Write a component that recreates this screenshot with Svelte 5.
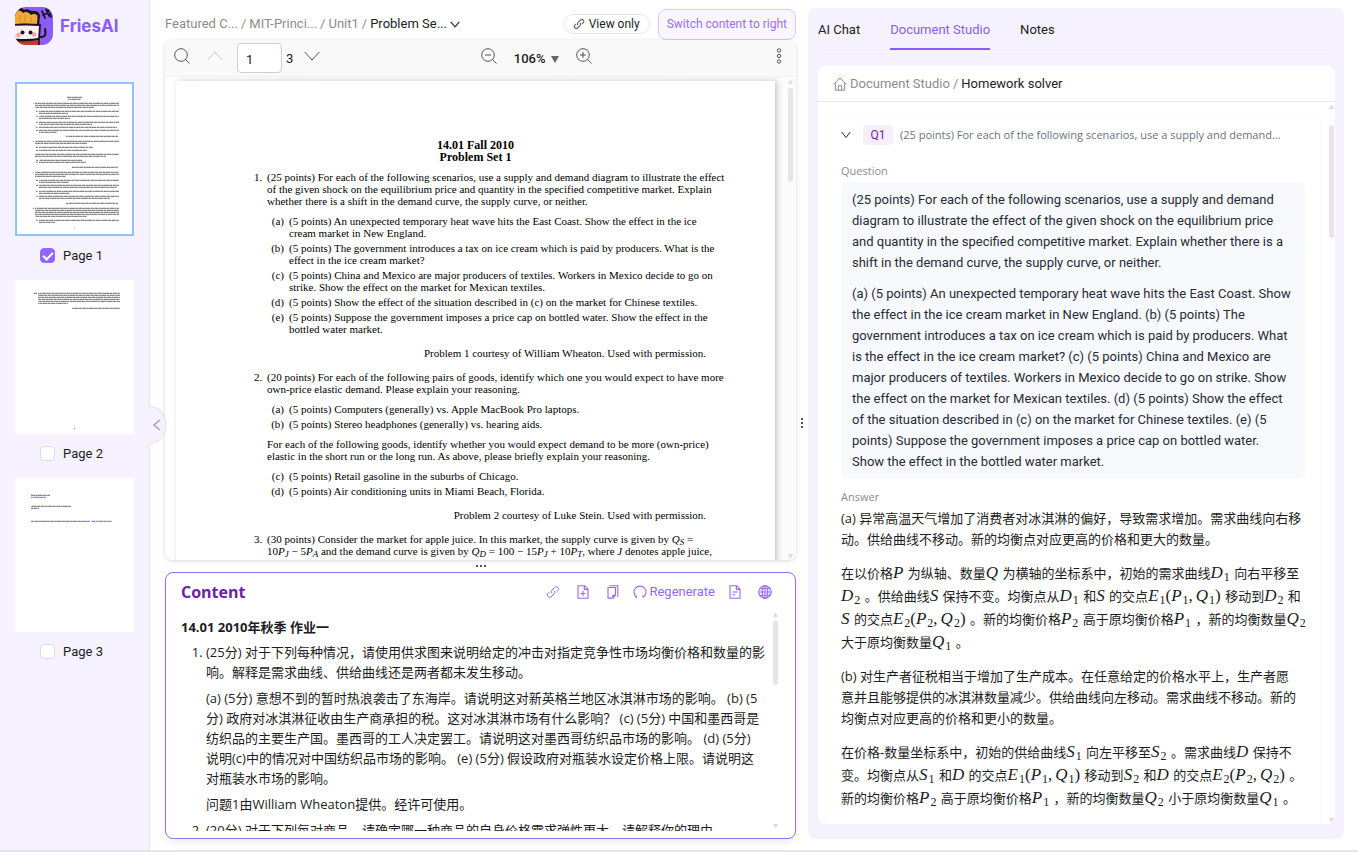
<script>
  // Thumbnail text rows: [x1, x2, y]; list markers are short rows of their own.
  const rows1 = [
    [52, 67, 15], [53, 66, 17],
    [18, 19, 21], [20, 104, 21], [20, 104, 23], [20, 79, 25],
    [21, 23, 29], [24, 104, 29], [24, 53, 31], [21, 23, 34], [24, 104, 34], [24, 55, 36],
    [21, 23, 40], [24, 104, 40], [24, 77, 42], [21, 23, 45], [24, 102, 45],
    [21, 23, 48], [24, 104, 48], [24, 42, 50], [51, 103, 54],
    [18, 19, 59], [20, 104, 59], [20, 72, 61], [21, 23, 65], [24, 78, 65], [21, 23, 68], [24, 72, 68],
    [20, 104, 72], [20, 91, 74], [21, 23, 78], [24, 67, 78], [21, 23, 80], [24, 71, 80], [57, 103, 85],
    [18, 19, 90], [20, 104, 90], [20, 104, 92], [20, 51, 94], [21, 23, 98], [24, 104, 98], [24, 54, 100],
    [21, 23, 103], [24, 104, 103], [24, 102, 105], [21, 23, 109], [24, 104, 109], [24, 55, 111],
    [21, 23, 114], [24, 104, 114], [24, 95, 116], [51, 103, 121],
    [18, 19, 126], [20, 104, 126], [20, 104, 128], [20, 104, 130], [20, 104, 132], [20, 72, 134],
    [21, 23, 138], [24, 104, 138], [24, 40, 140], [59, 60, 146]
  ];
  const rows2 = [
    [19, 22, 13], [23, 105, 13], [23, 105, 15], [23, 105, 17], [23, 105, 19], [23, 105, 21],
    [23, 53, 23], [57, 105, 28], [59, 60, 148]
  ];
  const rows3 = [
    [16, 35, 17], [16, 31, 19, 'link'], [16, 56, 28], [16, 24, 30], [16, 75, 43], [76, 97, 43, 'link']
  ];
  const pages = [
    { n: 1, rows: rows1, selected: true },
    { n: 2, rows: rows2, selected: false },
    { n: 3, rows: rows3, selected: false }
  ];

  // Text between $ signs is a formula; _n is a subscript.
  function parse(line) {
    return line.split('$').map((text, i) => {
      if (i % 2 === 0) return { text, math: null };
      const atoms = [];
      for (let k = 0; k < text.length; k++) {
        if (text[k] === '_') atoms.push({ c: text[++k], kind: 'sub' });
        else atoms.push({ c: text[k], kind: /[A-Z]/.test(text[k]) ? 'var' : text[k] === ',' ? 'comma' : 'op' });
      }
      return { text: '', math: atoms };
    });
  }

  // Problem set: each block has a kind, an optional marker and its typeset lines.
  const doc = [
    { k: 'item', m: '1.', l: ['(25 points) For each of the following scenarios, use a supply and demand diagram to illustrate the effect', 'of the given shock on the equilibrium price and quantity in the specified competitive market. Explain', 'whether there is a shift in the demand curve, the supply curve, or neither.'] },
    { k: 'sub first', m: '(a)', l: ['(5 points) An unexpected temporary heat wave hits the East Coast. Show the effect in the ice', 'cream market in New England.'] },
    { k: 'sub', m: '(b)', l: ['(5 points) The government introduces a tax on ice cream which is paid by producers. What is the', 'effect in the ice cream market?'] },
    { k: 'sub', m: '(c)', l: ['(5 points) China and Mexico are major producers of textiles. Workers in Mexico decide to go on', 'strike. Show the effect on the market for Mexican textiles.'] },
    { k: 'sub', m: '(d)', l: ['(5 points) Show the effect of the situation described in (c) on the market for Chinese textiles.'] },
    { k: 'sub', m: '(e)', l: ['(5 points) Suppose the government imposes a price cap on bottled water. Show the effect in the', 'bottled water market.'] },
    { k: 'credit', l: ['Problem 1 courtesy of William Wheaton. Used with permission.'] },
    { k: 'item', m: '2.', l: ['(20 points) For each of the following pairs of goods, identify which one you would expect to have more', 'own-price elastic demand. Please explain your reasoning.'] },
    { k: 'sub first', m: '(a)', l: ['(5 points) Computers (generally) vs. Apple MacBook Pro laptops.'] },
    { k: 'sub', m: '(b)', l: ['(5 points) Stereo headphones (generally) vs. hearing aids.'] },
    { k: 'item first', m: '', l: ['For each of the following goods, identify whether you would expect demand to be more (own-price)', 'elastic in the short run or the long run. As above, please briefly explain your reasoning.'] },
    { k: 'sub first', m: '(c)', l: ['(5 points) Retail gasoline in the suburbs of Chicago.'] },
    { k: 'sub', m: '(d)', l: ['(5 points) Air conditioning units in Miami Beach, Florida.'] },
    { k: 'credit', l: ['Problem 2 courtesy of Luke Stein. Used with permission.'] },
    { k: 'item', m: '3.', l: ['(30 points) Consider the market for apple juice. In this market, the supply curve is given by $Q_S =$', '$10P_J − 5P_A$ and the demand curve is given by $Q_D = 100 − 15P_J + 10P_T$, where $J$ denotes apple juice,', '$A$ denotes apples, and $T$ denotes tea.'] }
  ];

  const question = [
    ['(25 points) For each of the following scenarios, use a supply and demand', 'diagram to illustrate the effect of the given shock on the equilibrium price', 'and quantity in the specified competitive market. Explain whether there is a', 'shift in the demand curve, the supply curve, or neither.'],
    ['(a) (5 points) An unexpected temporary heat wave hits the East Coast. Show', 'the effect in the ice cream market in New England. (b) (5 points) The', 'government introduces a tax on ice cream which is paid by producers. What', 'is the effect in the ice cream market? (c) (5 points) China and Mexico are', 'major producers of textiles. Workers in Mexico decide to go on strike. Show', 'the effect on the market for Mexican textiles. (d) (5 points) Show the effect', 'of the situation described in (c) on the market for Chinese textiles. (e) (5', 'points) Suppose the government imposes a price cap on bottled water.', 'Show the effect in the bottled water market.']
  ];

  const answer = [
    { l: ['(a) 异常高温天气增加了消费者对冰淇淋的偏好，导致需求增加。需求曲线向右移', '动。供给曲线不移动。新的均衡点对应更高的价格和更大的数量。'] },
    { math: true, l: ['在以价格$P$ 为纵轴、数量$Q$ 为横轴的坐标系中，初始的需求曲线$D_1$ 向右平移至', '$D_2$ 。供给曲线$S$ 保持不变。均衡点从$D_1$ 和$S$ 的交点$E_1(P_1,Q_1)$ 移动到$D_2$ 和', '$S$ 的交点$E_2(P_2,Q_2)$ 。新的均衡价格$P_2$ 高于原均衡价格$P_1$ ，新的均衡数量$Q_2$', '大于原均衡数量$Q_1$ 。'] },
    { l: ['(b) 对生产者征税相当于增加了生产成本。在任意给定的价格水平上，生产者愿', '意并且能够提供的冰淇淋数量减少。供给曲线向左移动。需求曲线不移动。新的', '均衡点对应更高的价格和更小的数量。'] },
    { math: true, l: ['在价格-数量坐标系中，初始的供给曲线$S_1$ 向左平移至$S_2$ 。需求曲线$D$ 保持不', '变。均衡点从$S_1$ 和$D$ 的交点$E_1(P_1,Q_1)$ 移动到$S_2$ 和$D$ 的交点$E_2(P_2,Q_2)$ 。', '新的均衡价格$P_2$ 高于原均衡价格$P_1$ ，新的均衡数量$Q_2$ 小于原均衡数量$Q_1$ 。'] }
  ];
</script>

{#snippet rich(line)}
  {#each parse(line) as part}{#if part.math}<span class="math">{#each part.math as a}{#if a.kind === 'sub'}<sub>{a.c}</sub>{:else if a.kind === 'var'}<i>{a.c}</i>{:else if a.kind === 'comma'}<span class="comma">,</span>{:else}{a.c}{/if}{/each}</span>{:else}{part.text}{/if}{/each}
{/snippet}

{#snippet chain()}
  <path d="M6.800 9.400a2.600 2.600 0 0 1 0-3.600l3-3a2.600 2.600 0 0 1 3.700 3.700l-1.700 1.700M9.200 6.600a2.600 2.600 0 0 1 0 3.600l-3 3a2.600 2.600 0 0 1-3.700-3.700l1.700-1.700" />
{/snippet}

<div class="app">
  <aside class="side">
    <a class="brand" href="#home">
      <svg width="38" height="38" viewBox="0 0 38 38" aria-hidden="true">
        <defs><clipPath id="logo"><rect width="38" height="38" rx="11" /></clipPath></defs>
        <g clip-path="url(#logo)">
          <rect width="38" height="38" fill="#8b5cf6" />
          <path d="M0 0h3q4 0 6 3 4-2 7 1 7-1 9 4l-1 11H0z" fill="#1b1420" />
          <path d="M0 17V5q2-3 5-1 2 0 3 2 3-2 6 0 1 1 2 2 3-2 6 0 1 2 0 8v2q-11-2-22-1z" fill="#f0a93a" />
          <path d="M5 8v7M10 8v7M16 10v5" stroke="#d9892b" fill="none" />
          <path d="M-2 18q13-1 27 0l-1 14q-13 2-26 0z" fill="#fff0ee" stroke="#1b1420" stroke-width="1.800" />
          <path d="M-2 33q13 2 26-1v8H-2z" fill="#c8392c" stroke="#1b1420" stroke-width="1.600" />
          <circle cx="3.500" cy="28" r="2.300" fill="#f7a3a6" /><circle cx="19" cy="27.500" r="2.300" fill="#f7a3a6" />
          <circle cx="7.500" cy="25.500" r="2" fill="#1b1420" /><circle cx="15.500" cy="25.500" r="2" fill="#1b1420" />
          <path d="M25 30q7 1 5-8" fill="none" stroke="#1b1420" stroke-width="2" stroke-linecap="round" />
          <path d="M27 4l3 7M31 2l3 7M28 8l5-2M35 6l1 4M33 3l1 1" stroke="#1b1420" stroke-width="1.800" stroke-linecap="round" />
        </g>
      </svg>
      <span>FriesAI</span>
    </a>
    {#each pages as p}
      <div class="thumb">
        <svg class:current={p.selected} viewBox="0 0 119 154" aria-hidden="true">
          <rect width="119" height="154" fill="#fff" />
          {#each p.rows as r, i}
            <line x1={r[0]} x2={r[1]} y1={r[2] + 0.4} y2={r[2] + 0.4} stroke={r[3] ? '#8585f5' : '#888'} stroke-width="1.300" stroke-dasharray="4 .4 2 .3 5 .4 3 .5" stroke-dashoffset={i * 3} />
          {/each}
        </svg>
        <label><input type="checkbox" checked={p.selected} />Page {p.n}</label>
      </div>
    {/each}
    <button class="fold" aria-label="Collapse"><svg width="8" height="12" viewBox="0 0 8 12"><path d="M7 1L1 6l6 5" /></svg></button>
  </aside>

  <main class="middle">
    <header class="top">
      <nav class="crumbs">
        <a href="#1">Featured C...</a><span>/</span><a href="#2">MIT-Princi...</a><span>/</span><a href="#3">Unit1</a><span>/</span><a class="here" href="#4">Problem Se...</a>
        <svg width="10" height="7" viewBox="0 0 10 7"><path d="M.7.8L5 5.800 9.300.8" /></svg>
      </nav>
      <button class="pill"><svg width="12" height="12" viewBox="0 0 16 16">{@render chain()}</svg>View only</button>
      <button class="switch">Switch content to right</button>
    </header>

    <section class="viewer">
      <div class="tools">
        <button aria-label="Search"><svg width="16" height="16" viewBox="0 0 16 16"><circle cx="7" cy="7" r="6.300" /><path d="M11.500 11.500L15.500 15.500" /></svg></button>
        <button class="dim" aria-label="Previous page"><svg width="16" height="10" viewBox="0 0 16 10"><path d="M.7 9L8 1l7.300 8" /></svg></button>
        <input aria-label="Page number" value="1" />
        <span class="total">3</span>
        <button class="next" aria-label="Next page"><svg width="16" height="10" viewBox="0 0 16 10"><path d="M.7 1L8 9l7.300-8" /></svg></button>
        <button class="push" aria-label="Zoom out"><svg width="16" height="16" viewBox="0 0 16 16"><circle cx="7" cy="7" r="6.300" /><path d="M11.500 11.500L15.500 15.500M4 7h6" /></svg></button>
        <button class="zoom">106%<svg width="8" height="7" viewBox="0 0 8 7"><path d="M0 0h8L4 7z" /></svg></button>
        <button class="in" aria-label="Zoom in"><svg width="16" height="16" viewBox="0 0 16 16"><circle cx="7" cy="7" r="6.300" /><path d="M11.500 11.500L15.500 15.500M4 7h6M7 4v6" /></svg></button>
        <button class="push" aria-label="More"><svg width="6" height="16" viewBox="0 0 6 16"><circle cx="3" cy="2.500" r="1.700" /><circle cx="3" cy="8" r="1.700" /><circle cx="3" cy="13.500" r="1.700" /></svg></button>
      </div>
      <div class="stage">
        <article class="paper">
          <h1>14.01 Fall 2010<br />Problem Set 1</h1>
          {#each doc as b}
            <div class="block {b.k}">
              {#if b.m !== undefined}<span class="mark">{b.m}</span>{/if}
              <div class="lines">
                {#each b.l as line, i}
                  <div class="line">{@render rich(line)}</div>
                {/each}
              </div>
            </div>
          {/each}
        </article>
        <div class="bar"><i class="up"></i><b></b><i class="down"></i></div>
      </div>
    </section>

    <div class="grip" aria-hidden="true"><i></i><i></i><i></i></div>

    <section class="content">
      <header>
        <h2>Content</h2>
        <button aria-label="Copy link"><svg width="14" height="14" viewBox="0 0 16 16">{@render chain()}</svg></button>
        <button aria-label="Add file"><svg width="14" height="14" viewBox="0 0 14 14"><path d="M2 .7h6.500L12 4.200v9.100H2zM8.300.9v3.500h3.500M7 6v5M4.500 8.500h5" /></svg></button>
        <button aria-label="Copy"><svg width="14" height="14" viewBox="0 0 14 14"><path d="M3.500.7h8.300v11.300M2 2.500h7.500v7.800l-2.700 2.800H2zM9.500 10.300H6.800v2.800" /></svg></button>
        <button class="regen"><svg width="14" height="14" viewBox="0 0 14 14"><path d="M4 12.300A6 6 0 1 1 10 12.300M4 12.300l-1.800-.4M10 12.300l-.2-1.900" /></svg>Regenerate</button>
        <button aria-label="Document"><svg width="14" height="14" viewBox="0 0 14 14"><path d="M2 .7h6.500L12 4.200v9.100H2zM8.300.9v3.500h3.500M4.300 7h5.400M4.300 9.700h3" /></svg></button>
        <button aria-label="Language"><svg width="14" height="14" viewBox="0 0 14 14"><circle cx="7" cy="7" r="6.300" /><ellipse cx="7" cy="7" rx="2.800" ry="6.300" /><path d="M.7 7h12.600M7 .7v12.600M1.700 3.800h10.600M1.700 10.200h10.600" /></svg></button>
      </header>
      <div class="body">
        <h3>14.01 2010年秋季 作业一</h3>
        <ol>
          <li>
            <p>(25分) 对于下列每种情况，请使用供求图来说明给定的冲击对指定竞争性市场均衡价格和数量的影<br />响。解释是需求曲线、供给曲线还是两者都未发生移动。</p>
            <p>(a) (5分) 意想不到的暂时热浪袭击了东海岸。请说明这对新英格兰地区冰淇淋市场的影响。 (b) (5<br />分) 政府对冰淇淋征收由生产商承担的税。这对冰淇淋市场有什么影响？ (c) (5分) 中国和墨西哥是<br />纺织品的主要生产国。墨西哥的工人决定罢工。请说明这对墨西哥纺织品市场的影响。 (d) (5分)<br />说明(c)中的情况对中国纺织品市场的影响。 (e) (5分) 假设政府对瓶装水设定价格上限。请说明这<br />对瓶装水市场的影响。</p>
            <p>问题1由William Wheaton提供。经许可使用。</p>
          </li>
          <li><p>(20分) 对于下列每对商品，请确定哪一种商品的自身价格需求弹性更大，请解释你的理由。</p></li>
        </ol>
      </div>
      <div class="bar"><i class="up"></i><b></b><i class="down"></i></div>
    </section>
  </main>

  <div class="split" aria-hidden="true"><i></i><i></i><i></i></div>

  <section class="right">
    <nav class="tabs">
      <button>AI Chat</button>
      <button class="on">Document Studio</button>
      <button>Notes</button>
    </nav>
    <div class="card">
      <div class="path">
        <svg width="14" height="14" viewBox="0 0 14 14"><path d="M.6 7.300L7 .9l6.400 6.400M2.300 6v7.200h9.400V6M5.300 13V8.600h3.400V13" /></svg>
        <a href="#studio">Document Studio</a><span>/</span><a class="here" href="#solver">Homework solver</a>
      </div>
      <div class="scroll">
        <article class="qa">
          <div class="qhead">
            <svg width="10" height="8" viewBox="0 0 10 8"><path d="M.7 1L5 6.500 9.300 1" /></svg>
            <span class="tag">Q1</span>
            <span class="sum">(25 points) For each of the following scenarios, use a supply and demand...</span>
          </div>
          <h4>Question</h4>
          <div class="quest">
            {#each question as para}
              <p>{#each para as line, i}{#if i}<br />{/if}{line}{/each}</p>
            {/each}
          </div>
          <h4 class="ans">Answer</h4>
          <div class="answer">
            {#each answer as para}
              <p class:formula={para.math}>{#each para.l as line, i}{#if i}<br />{/if}{@render rich(line)}{/each}</p>
            {/each}
          </div>
        </article>
        <div class="bar"><i class="up"></i><b></b><i class="down"></i></div>
      </div>
    </div>
  </section>
</div>

<style>
  :global(body) { background: #fff; }
  .app, .app * { box-sizing: border-box; }
  .app {
    display: grid;
    grid-template-columns: 150px 15px minmax(0, 631fr) 12px minmax(0, 536fr);
    grid-template-rows: minmax(0, 1fr);
    height: 100vh;
    min-height: 600px;
    padding-right: 14px;
    border-bottom: 2px solid #e5e6ea;
    font: 13px/20px Roboto, "Noto Sans", sans-serif;
    color: #1c1c22;
    overflow: hidden;
  }
  h1, h2, h3, h4, p, ol { margin: 0; padding: 0; }
  a { color: inherit; text-decoration: none; }
  button { border: 0; background: none; padding: 0; margin: 0; font: inherit; color: inherit; display: flex; align-items: center; justify-content: center; cursor: pointer; white-space: nowrap; }
  svg { flex: none; fill: none; stroke: currentColor; }

  .side { position: relative; background: #f5f1ff; border-right: 1px solid #e9e5f3; padding: 7px 15px; }
  .brand { display: flex; align-items: center; gap: 7px; height: 38px; margin-bottom: 37px; font: 700 17px/24px Inter, sans-serif; color: #8b5cf6; }
  .brand svg { stroke: none; }
  .thumb > svg { display: block; width: 100%; height: 154px; stroke: none; }
  .thumb > .current { outline: 2px solid #91c3f9; outline-offset: -2px; }
  .thumb label { display: flex; align-items: center; justify-content: center; gap: 8px; height: 44px; padding: 0 6px 5px 0; }
  .thumb input { appearance: none; width: 15px; height: 15px; margin: 0; border: 1px solid #dcdce0; border-radius: 4px; background: #fff; display: grid; place-items: center; }
  .thumb input:checked { background: #9168fa; border-color: #9168fa; }
  .thumb input:checked::after { content: ""; width: 4px; height: 8px; margin-bottom: 2px; border: solid #fff; border-width: 0 2px 2px 0; transform: rotate(45deg); }
  .fold { position: absolute; left: 149px; top: 406px; width: 17px; height: 38px; border: 1px solid #e6e1f2; border-left: 0; border-radius: 0 19px 19px 0; background: #f5f1ff; color: #a3a5b3; z-index: 2; }
  .fold svg { stroke-width: 1.500; }

  .middle { grid-column: 3; display: grid; grid-template-rows: 32px minmax(0, 520fr) 12px minmax(0, 267fr); grid-template-columns: minmax(0, 1fr); min-width: 0; padding: 8px 0 11px; }
  .top { display: flex; align-items: center; gap: 8px; }
  .crumbs { display: flex; align-items: center; gap: 3px; margin-right: auto; color: #8c8c8c; white-space: nowrap; }
  .here { color: #1c1c22; }
  .crumbs svg { stroke: #333; stroke-width: 1.300; }
  .pill { height: 20px; padding: 0 9px; gap: 4px; border: 1px solid #e6e6ea; border-radius: 10px; font-size: 12px; }
  .pill svg { color: #666; stroke-width: 1.500; }
  .switch { height: 31px; padding: 0 8px; border: 1px solid #d9c9ff; border-radius: 8px; background: #f9f6ff; color: #9a6ffb; font-size: 12px; }

  .viewer { display: flex; flex-direction: column; min-height: 0; border-radius: 8px; overflow: hidden; background: #fff; box-shadow: 0 1px 4px rgba(0, 0, 0, .16); }
  .tools { display: flex; align-items: center; height: 37px; padding: 0 14px 0 9px; background: #f9f9f9; border-bottom: 1px solid #f0f0f0; color: #555; flex: none; }
  .tools > button { margin-bottom: 4px; }
  .tools .dim { color: #c9c9c9; margin-left: 17px; }
  .tools input { width: 45px; height: 30px; margin-left: 14px; padding: 2px 8px 0; border: 1px solid #cfcfcf; border-radius: 4px; background: #fff; font: inherit; color: #222; }
  .total { margin: 2px 0 0 4px; color: #222; }
  .tools .next { margin-left: 11px; }
  .tools .push { margin-left: auto; }
  .tools .in { margin-right: 24px; }
  .tools > .zoom { margin: 2px 17px 0; gap: 5px; color: #222; font-weight: 500; }
  .zoom svg { fill: #666; stroke: none; }

  .stage { position: relative; flex: 1; min-height: 0; padding: 4px 21px 0 11px; overflow: hidden; background: linear-gradient(90deg, #fff, #fbfbfb); }
  .paper { height: 800px; padding: 58px 69px 0 78px; background: #fff; box-shadow: 2px 0 6px rgba(0, 0, 0, .22); font: 11px/12px "Liberation Serif", "Times New Roman", serif; color: #000; }
  .paper h1 { margin-left: -9px; font-size: 12px; line-height: 12px; text-align: center; }
  .block { display: flex; margin-top: 3px; }
  .block.item { margin-top: 12px; }
  .block.first { margin-top: 8px; }
  h1 + .block.item { margin-top: 8px; }
  .block.credit { margin-top: 12px; justify-content: flex-end; }
  .mark { flex: none; width: 8px; margin-right: 5px; text-align: right; }
  .sub .mark { width: 30px; }
  .lines { flex: 1; min-width: 0; }
  .credit .lines { flex: none; }
  .line { white-space: nowrap; height: 12px; }
  .line .math sub { font-style: italic; font-size: 9px; margin: 0; vertical-align: -2px; }

  .bar { position: absolute; top: 0; bottom: 0; right: 3px; width: 5px; display: flex; flex-direction: column; }
  .bar b { height: 94px; margin-top: 4px; border-radius: 3px; background: #e6e6e6; }
  .bar i { border: solid transparent; border-width: 0 2px; height: 0; }
  .bar .up { border-bottom: 4px solid #dcdcdc; margin-top: 3px; }
  .bar .down { border-top: 4px solid #dcdcdc; margin-top: auto; margin-bottom: 2px; }

  .grip { display: flex; justify-content: center; align-items: center; gap: 2px; }
  .grip i, .split i { width: 2px; height: 2px; background: #555; }
  .split { display: flex; flex-direction: column; justify-content: center; align-items: center; gap: 2px; padding-bottom: 4px; }

  .content { position: relative; display: flex; flex-direction: column; min-height: 0; padding: 7px 15px; border: 1px solid #9a6cf0; border-radius: 8px; background: #fff; box-shadow: 0 3px 8px rgba(0, 0, 0, .08); }
  .content header { display: flex; align-items: center; gap: 16px; height: 24px; padding-right: 8px; color: #9568f8; flex: none; }
  .content h2 { margin-right: auto; font: 700 16px/24px "Open Sans", sans-serif; color: #6b21a8; }
  .content header svg { stroke-width: 1.100; }
  .content .regen { gap: 2px; margin: 0 -3px; }
  .body { flex: 1; min-height: 0; margin-top: 13px; overflow: hidden; white-space: nowrap; font: 13px/20px "Open Sans", "Noto Sans CJK SC", sans-serif; }
  .body h3 { font-size: 13px; line-height: 20px; margin-bottom: 5px; }
  .body ol { padding-left: 25px; }
  .body li { margin-bottom: 6px; }
  .body p + p { margin-top: 6px; }
  .content .bar { top: 37px; bottom: 8px; right: 17px; }
  .content .bar b { height: 65px; margin-top: 3px; }

  .right { display: flex; flex-direction: column; min-width: 0; margin: 8px 0 11px; padding: 0 9px 15px 10px; background: #f5f1ff; border-radius: 8px; }
  .tabs { display: flex; gap: 30px; height: 43px; flex: none; border-bottom: 1px solid #f2eefa; }
  .tabs button { padding-top: 3px; border-bottom: 2px solid transparent; }
  .tabs .on { color: #8b5cf6; border-color: #8b5cf6; }
  .card { display: flex; flex-direction: column; flex: 1; min-height: 0; margin-top: 15px; background: #fff; border-radius: 8px; }
  .path { display: flex; align-items: center; gap: 3px; height: 36px; padding-left: 15px; border-bottom: 1px solid #e8e8ea; color: #8c8c8c; flex: none; }
  .scroll { position: relative; flex: 1; min-height: 0; overflow: hidden; }
  .qa { height: 900px; margin: 11px 14px 0 7px; padding: 8px 15px; border: 1px solid #fafafa; border-radius: 8px; white-space: nowrap; }
  .qhead { display: flex; align-items: center; height: 26px; color: #333; }
  .tag { display: grid; place-items: center; width: 30px; height: 20px; margin: 0 7px 0 12px; border-radius: 4px; background: #f6efff; color: #6b21a8; font-size: 12px; }
  .sum { color: #6b7280; font: 11px/20px "Open Sans", sans-serif; }
  h4 { margin-top: 13px; font: 11px/20px "Open Sans", sans-serif; color: #8c8c8c; }
  .quest { padding: 7px 11px 6px; margin-top: 1px; border-radius: 6px; background: #f8f9fc; line-height: 21px; color: #262b38; }
  .quest p + p { margin-top: 10px; }
  .ans { margin-top: 9px; }
  .answer { margin-top: 1px; font: 13px/21px "Open Sans", "Noto Sans CJK SC", sans-serif; }
  .answer p + p { margin-top: 12px; }
  .answer .formula { line-height: 23px; }
  .math { font-family: "Liberation Serif", serif; line-height: 1; }
  .math sub { font-size: 12px; line-height: 0; vertical-align: -3px; margin-left: 1px; }
  .answer .math { font-size: 17px; margin-right: 1px; }
  .comma { margin-right: 3px; }
  .scroll .bar { right: 1px; }
  .scroll .bar b { height: 113px; margin-top: 16px; }
</style>
